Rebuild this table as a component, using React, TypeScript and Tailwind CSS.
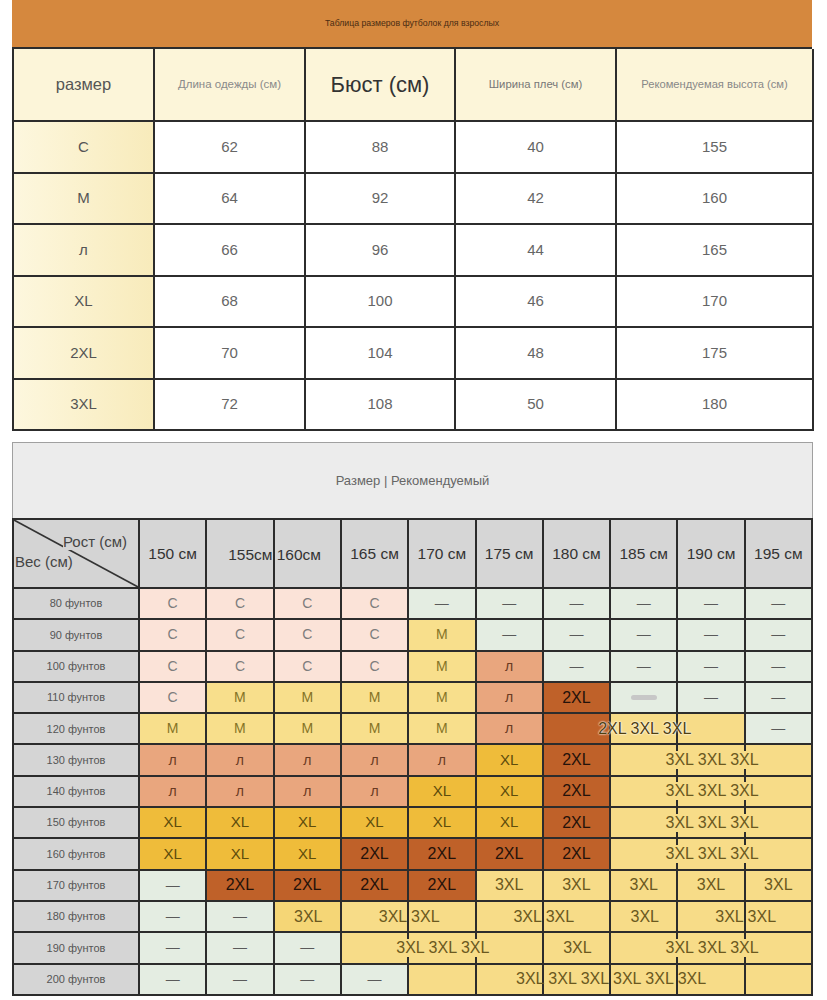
import React from "react";

const colStart = [
  "col-start-1",
  "col-start-2",
  "col-start-3",
  "col-start-4",
  "col-start-5",
  "col-start-6",
  "col-start-7",
  "col-start-8",
  "col-start-9",
  "col-start-10",
  "col-start-11",
];
const colSpan = ["col-span-1", "col-span-2", "col-span-3", "col-span-4", "col-span-5", "col-span-6"];

// bg / label / text colour for each kind of cell
const kinds: Record<string, { bg: string; label: string; text: string }> = {
  c: { bg: "bg-[#fbe3d8]", label: "C", text: "text-[#7d7d7d] text-[14px]" },
  d: { bg: "bg-[#e4ede2]", label: "—", text: "text-[#5a5a5a] text-[14px]" },
  g: { bg: "bg-[#e4ede2]", label: "", text: "" },
  m: { bg: "bg-[#f8df8c]", label: "M", text: "text-[#857326] text-[14px]" },
  l: { bg: "bg-[#e9a67e]", label: "л", text: "text-[#6a3a22] text-[14px]" },
  x: { bg: "bg-[#efbc3a]", label: "XL", text: "text-[#5e4c0c] text-[15px]" },
  z: { bg: "bg-[#bf6129]", label: "2XL", text: "text-[#24120a] text-[16px]" },
  t: { bg: "bg-[#f7dc88]", label: "3XL", text: "text-[#6a5820] text-[16px]" },
  u: { bg: "bg-[#f5d676]", label: "3XL", text: "text-[#6a5820] text-[16px]" },
};

type Overlay = { from: number; span: number; text: string; band?: boolean; glow?: boolean };

const chart: { w: string; c: string; o?: Overlay[] }[] = [
  { w: "80 фунтов", c: "ccccdddddd" },
  { w: "90 фунтов", c: "ccccmddddd" },
  { w: "100 фунтов", c: "ccccmldddd" },
  { w: "110 фунтов", c: "cmmmmlzgdd" },
  { w: "120 фунтов", c: "mmmmmlzttd", o: [{ from: 6, span: 3, text: "2XL 3XL 3XL", glow: true }] },
  { w: "130 фунтов", c: "lllllxzttt", o: [{ from: 7, span: 3, text: "3XL 3XL 3XL", band: true }] },
  { w: "140 фунтов", c: "llllxxzttt", o: [{ from: 7, span: 3, text: "3XL 3XL 3XL", band: true }] },
  { w: "150 фунтов", c: "xxxxxxzttt", o: [{ from: 7, span: 3, text: "3XL 3XL 3XL", band: true }] },
  { w: "160 фунтов", c: "xxxzzzzttt", o: [{ from: 7, span: 3, text: "3XL 3XL 3XL", band: true }] },
  { w: "170 фунтов", c: "dzzzzttttt" },
  {
    w: "180 фунтов",
    c: "dduttttttt",
    o: [
      { from: 2, span: 1, text: "3XL" },
      { from: 3, span: 2, text: "3XL 3XL" },
      { from: 5, span: 2, text: "3XL 3XL" },
      { from: 7, span: 1, text: "3XL" },
      { from: 8, span: 2, text: "3XL 3XL" },
    ],
  },
  {
    w: "190 фунтов",
    c: "dddttttttt",
    o: [
      { from: 3, span: 3, text: "3XL 3XL 3XL", band: true },
      { from: 6, span: 1, text: "3XL" },
      { from: 7, span: 3, text: "3XL 3XL 3XL", band: true },
    ],
  },
  { w: "200 фунтов", c: "ddddtttttt", o: [{ from: 4, span: 6, text: "3XL 3XL 3XL 3XL 3XL 3XL" }] },
];

const sizes = [
  ["C", "62", "88", "40", "155"],
  ["M", "64", "92", "42", "160"],
  ["л", "66", "96", "44", "165"],
  ["XL", "68", "100", "46", "170"],
  ["2XL", "70", "104", "48", "175"],
  ["3XL", "72", "108", "50", "180"],
];

const heights = ["150 см", "155см", "160см", "165 см", "170 см", "175 см", "180 см", "185 см", "190 см", "195 см"];

const line = "border-[#2c2c2c]";

const SizeTable = () => (
  <div className="ml-[12px] w-[800px]">
    <div className="h-[47px] bg-[#d5883e] flex items-center justify-center text-[8.7px] text-[#4a2c12]">
      Таблица размеров футболок для взрослых
    </div>
    <div className={`grid grid-cols-[141px_151px_150px_161px_197px] border-l-2 border-t-2 ${line}`}>
      <div className={`h-[73px] border-r-2 border-b-2 ${line} bg-[#fcf5d9] flex items-center justify-center text-[16.5px] text-[#555]`}>
        размер
      </div>
      <div className={`h-[73px] border-r-2 border-b-2 ${line} bg-[#fcf5d9] flex items-center justify-center text-[11.5px] text-[#8a8a8a]`}>
        Длина одежды (см)
      </div>
      <div className={`h-[73px] border-r-2 border-b-2 ${line} bg-[#fcf5d9] flex items-center justify-center text-[22px] text-[#333]`}>
        Бюст (см)
      </div>
      <div className={`h-[73px] border-r-2 border-b-2 ${line} bg-[#fcf5d9] flex items-center justify-center text-[11.3px] text-[#777]`}>
        Ширина плеч (см)
      </div>
      <div className={`h-[73px] border-r-2 border-b-2 ${line} bg-[#fcf5d9] flex items-center justify-center text-[11.2px] text-[#888]`}>
        Рекомендуемая высота (см)
      </div>
      {sizes.map((row) =>
        row.map((v, i) => (
          <div
            key={row[0] + i}
            className={`h-[51.5px] border-r-2 border-b-2 ${line} flex items-center justify-center text-[15px] ${
              i === 0 ? "bg-linear-to-r from-[#fdf7de] to-[#f8ebbb] text-[#555]" : "bg-white text-[#666]"
            }`}
          >
            {v}
          </div>
        ))
      )}
    </div>
  </div>
);

const ChartRow = ({ w, c, o }: { w: string; c: string; o?: Overlay[] }) => {
  const covered = new Set<number>();
  o?.forEach((ov) => {
    for (let k = ov.from; k < ov.from + ov.span; k++) covered.add(k);
  });
  return (
    <div className="grid grid-cols-[126px_repeat(10,minmax(0,1fr))] h-[31.3px]">
      <div className={`row-start-1 col-start-1 border-r-2 border-b-2 ${line} bg-[#d5d5d5] flex items-center justify-center text-[11px] text-[#555]`}>
        {w}
      </div>
      {c.split("").map((k, i) => {
        const kind = kinds[k];
        return (
          <div
            key={i}
            className={`row-start-1 ${colStart[i + 1]} border-r-2 border-b-2 ${line} ${kind.bg} flex items-center justify-center ${kind.text}`}
          >
            {k === "g" ? <div className="w-[26px] h-[5px] rounded-full bg-[#c7c7c7]" /> : covered.has(i) ? null : kind.label}
          </div>
        );
      })}
      {o?.map((ov) => (
        <div
          key={ov.from}
          className={`row-start-1 ${colStart[ov.from + 1]} ${colSpan[ov.span - 1]} flex items-center justify-center pb-[2px] text-[16px] text-[#6a5820] whitespace-pre`}
        >
          <span
            className={`leading-[18px] ${ov.band ? "bg-[#f7dc88]" : ""} ${
              ov.glow ? "text-[#4f4010] [text-shadow:0_0_2px_#fff,0_0_2px_#fff]" : ""
            }`}
          >
            {ov.text}
          </span>
        </div>
      ))}
    </div>
  );
};

const Chart = () => (
  <div className="ml-[12px] mt-[11px] w-[801px]">
    <div className="h-[76px] bg-[#ececec] border border-b-0 border-[#a0a0a0] flex items-center justify-center text-[13px] text-[#666]">
      Размер | Рекомендуемый
    </div>
    <div className={`border-l-2 border-t-2 ${line}`}>
      <div className="grid grid-cols-[126px_repeat(10,minmax(0,1fr))] h-[69px]">
        <div className={`row-start-1 col-start-1 relative border-r-2 border-b-2 ${line} bg-[#d4d4d4]`}>
          <svg className="absolute inset-0" width="124" height="67" viewBox="0 0 124 67">
            <line x1="0" y1="0" x2="124" y2="67" stroke="#333" strokeWidth="1.6" />
          </svg>
          <span className="absolute left-[49px] top-[13px] text-[15px] text-[#444] bg-[#d4d4d4] leading-[17px]">Рост (см)</span>
          <span className="absolute left-[1px] top-[33px] text-[15px] text-[#444] leading-[17px]">Вес (см)</span>
        </div>
        {heights.map((h, i) => (
          <div
            key={h}
            className={`row-start-1 ${colStart[i + 1]} border-r-2 border-b-2 ${line} bg-[#d6d6d6] flex items-center justify-center text-[15.5px] text-[#333]`}
          >
            {i === 1 || i === 2 ? null : h}
          </div>
        ))}
        <div className="row-start-1 col-start-3 col-span-2 flex items-center justify-center text-[15.5px] text-[#333] whitespace-pre">
          155см 160см
        </div>
      </div>
      {chart.map((r) => (
        <ChartRow key={r.w} {...r} />
      ))}
    </div>
  </div>
);

const App = () => {
  return (
    <div className="w-[827px] h-[1000px] bg-white overflow-hidden font-['Liberation_Sans',Arial,sans-serif]">
      <SizeTable />
      <Chart />
    </div>
  );
};

export default App;
